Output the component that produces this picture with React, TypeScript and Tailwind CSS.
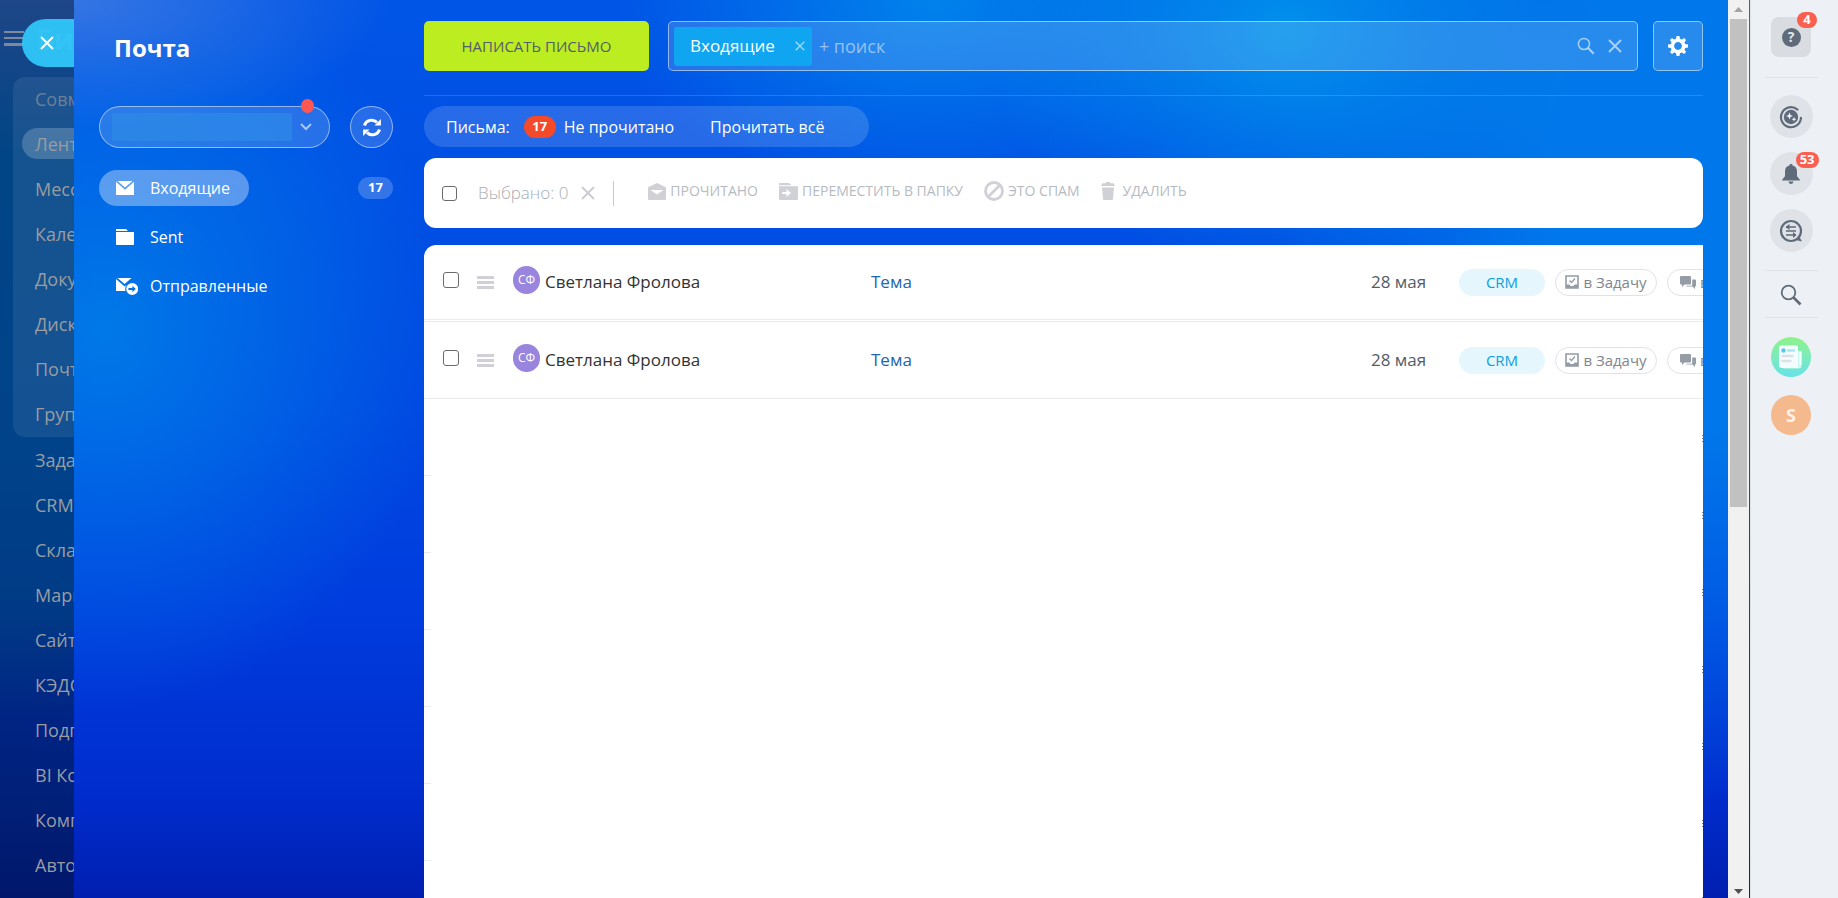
import type { ReactNode } from "react";

const menuGroup = ["Совместная работа", "Лента", "Мессенджер", "Календарь", "Документы", "Диск", "Почта", "Группы"];
const menuItems = ["Задачи", "CRM", "Склад", "Маркетинг", "Сайты", "КЭДО", "Подпись", "BI Конструктор", "Компания", "Автоматизация"];

const messages = [
    { id: 1, from: "Светлана Фролова", initials: "СФ", subject: "Тема", date: "28 мая" },
    { id: 2, from: "Светлана Фролова", initials: "СФ", subject: "Тема", date: "28 мая" },
];

const placeholderRows = [1, 2, 3, 4, 5, 6, 7];

function CrossIcon({ className }: { className: string }) {
    return (
        <svg viewBox="0 0 14 14" fill="none" stroke="currentColor" className={className}>
            <path d="M1 1l12 12M13 1L1 13" strokeWidth="1.9" />
        </svg>
    );
}

function LensIcon({ className }: { className: string }) {
    return (
        <svg viewBox="0 0 22 22" fill="none" stroke="currentColor" className={className}>
            <circle cx="8.5" cy="8.5" r="6.8" strokeWidth="1.8" />
            <path d="M13.5 13.5l7 7" strokeWidth="2.6" />
        </svg>
    );
}

function EnvelopeIcon() {
    return (
        <svg viewBox="0 0 18 14" fill="currentColor" className="w-[18px] h-[14px]">
            <path d="M1.5 0h15L9 6.6z" />
            <path d="M0 .8l9 8 9-8V14H0z" />
        </svg>
    );
}

function FolderIcon() {
    return (
        <svg viewBox="0 0 18 16" fill="currentColor" className="w-[18px] h-4">
            <path d="M0 0h10l2 2H0z" />
            <path d="M0 3h18v12.2a.8.8 0 0 1-.8.8H.8a.8.8 0 0 1-.8-.8z" />
        </svg>
    );
}

function OutboxIcon() {
    return (
        <svg viewBox="0 0 22 17" fill="currentColor" className="w-[22px] h-[17px]">
            <path d="M1.5 0h14L8.6 6z" />
            <path d="M0 1l8.6 7.4L11 6.6a7 7 0 0 0-1.6 6.4H0z" />
            <path fillRule="evenodd" d="M16.2 5a6 6 0 1 1 0 12 6 6 0 0 1 0-12zm.2 2.8v2.3h-4v1.8h4v2.3l3.4-3.2z" />
        </svg>
    );
}

function RefreshIcon() {
    return (
        <svg viewBox="0 0 18 19" fill="none" stroke="currentColor" className="w-[18px] h-[19px]">
            <path d="M1.4 7.500A7.6 7.6 0 0 1 14 4.400" strokeWidth="3" />
            <path d="M16.600 11.500A7.6 7.6 0 0 1 4 14.600" strokeWidth="3" />
            <path d="M17.900 1v6.600h-6.400zM.1 18v-6.600h6.400z" fill="currentColor" stroke="none" />
        </svg>
    );
}

function GearIcon() {
    return (
        <svg viewBox="-10 -10 20 20" className="w-5 h-5">
            <g fill="currentColor">
                <path d="M-2-7l.6-3h2.800l.6 3z" />
                <path d="M-2-7l.6-3h2.800l.6 3z" transform="rotate(45)" />
                <path d="M-2-7l.6-3h2.800l.6 3z" transform="rotate(90)" />
                <path d="M-2-7l.6-3h2.800l.6 3z" transform="rotate(135)" />
                <path d="M-2-7l.6-3h2.800l.6 3z" transform="rotate(180)" />
                <path d="M-2-7l.6-3h2.800l.6 3z" transform="rotate(225)" />
                <path d="M-2-7l.6-3h2.800l.6 3z" transform="rotate(270)" />
                <path d="M-2-7l.6-3h2.800l.6 3z" transform="rotate(315)" />
            </g>
            <circle r="5.700" fill="none" stroke="currentColor" strokeWidth="3.600" />
        </svg>
    );
}

function ActionButton({ icon, label }: { icon: ReactNode; label: string }) {
    return (
        <button className="flex items-center gap-1 text-sm whitespace-nowrap text-[#b6bbc2]">
            <span className="text-[#cfd1d6]">{icon}</span>
            {label}
        </button>
    );
}

function PortalMenu() {
    return (
        <aside className="relative w-[74px] shrink-0 overflow-hidden bg-[linear-gradient(to_bottom,#1e4688_0%,#004586_18%,#00438a_50%,#003a86_68%,#002484_80%,#001e74_92%,#00176c_100%)]">
            <div className="flex items-center gap-3 h-[77px] pl-1 whitespace-nowrap">
                <svg viewBox="0 0 20 15" className="w-5 h-[15px] shrink-0 fill-[#7e8a9c]">
                    <path d="M0 0h20v2H0zM0 6h20v2H0zM0 12h20v3H0z" />
                </svg>
                <span className="text-[28px] font-bold text-[#8fa0b0]">Битрикс</span>
            </div>
            <nav className="text-lg whitespace-nowrap text-[#999da1]">
                <div className="ml-[13px] h-[360px] rounded-l-xl bg-white/8">
                    {menuGroup.map((item, i) => (
                        <a
                            key={item}
                            href="#"
                            className={
                                i === 1
                                    ? "flex items-center h-[31px] my-[7px] ml-[9px] pl-[13px] rounded-l-full bg-white/20"
                                    : i === 0
                                      ? "flex items-center h-11 pl-[22px] text-[#6c8097]"
                                      : "flex items-center h-[45px] pl-[22px]"
                            }
                        >
                            {item}
                        </a>
                    ))}
                </div>
                {menuItems.map((item) => (
                    <a key={item} href="#" className="flex items-center h-[45px] pl-[35px]">
                        {item}
                    </a>
                ))}
            </nav>
            <button
                aria-label="Закрыть"
                className="absolute top-[19px] right-0 w-[52px] h-12 pl-[18px] rounded-l-full bg-[#2fc4f7]/97 text-white"
            >
                <CrossIcon className="w-[14px] h-[14px]" />
            </button>
        </aside>
    );
}

function FolderList() {
    return (
        <div className="w-[294px] shrink-0 text-white">
            <h1 className="mt-[30px] ml-[15px] text-2xl leading-9 font-bold">Почта</h1>
            <div className="flex items-center justify-between mt-10">
                <div className="relative flex items-center w-[231px] h-[42px] pl-3 rounded-full border border-white/50 bg-white/15">
                    <select aria-label="Почтовый ящик" className="w-[180px] h-7 appearance-none bg-[#2e8ae6]/70">
                        <option></option>
                    </select>
                    <svg viewBox="0 0 12 8" fill="none" stroke="currentColor" className="w-3 h-2 ml-2 text-white/60">
                        <path d="M1 1l5 5 5-5" strokeWidth="2" />
                    </svg>
                    <span className="absolute -top-2 right-[15px] w-[13px] h-[14px] rounded-full bg-[#ff5752]" />
                </div>
                <button
                    aria-label="Обновить"
                    className="flex items-center justify-center w-[43px] h-[42px] rounded-full border border-white/50 bg-white/15"
                >
                    <RefreshIcon />
                </button>
            </div>
            <nav className="mt-[22px] text-base">
                <div className="flex items-center justify-between">
                    <a href="#" className="flex items-center gap-4 h-9 pl-[17px] pr-[19px] rounded-full bg-white/35">
                        <EnvelopeIcon />
                        Входящие
                    </a>
                    <span className="flex items-center justify-center w-[35px] h-[22px] rounded-full bg-white/20 text-[13px] font-bold">
                        17
                    </span>
                </div>
                <a href="#" className="flex items-center gap-4 h-9 mt-[13px] pl-[17px]">
                    <FolderIcon />
                    Sent
                </a>
                <a href="#" className="flex items-center gap-3 h-9 mt-[13px] pl-[17px]">
                    <OutboxIcon />
                    Отправленные
                </a>
            </nav>
        </div>
    );
}

function SearchBar() {
    return (
        <div className="flex mt-[21px]">
            <button className="w-[225px] h-[50px] rounded-[5px] bg-[#bbed21] text-[15px] text-[#535c69]">
                НАПИСАТЬ ПИСЬМО
            </button>
            <div className="flex flex-1 items-center h-[50px] ml-[19px] pl-[5px] pr-[15px] rounded-[5px] border border-white/50 bg-white/15">
                <span className="flex items-center h-[39px] pl-4 pr-[7px] rounded-[3px] bg-[#0fa5f0] text-[17px] text-white">
                    Входящие
                    <button aria-label="Убрать фильтр" className="ml-5 text-white/60">
                        <CrossIcon className="w-[10px] h-[10px]" />
                    </button>
                </span>
                <input
                    aria-label="Поиск"
                    placeholder="+ поиск"
                    className="flex-1 min-w-0 ml-[7px] bg-transparent text-lg text-white outline-none placeholder:text-white/50"
                />
                <button aria-label="Найти" className="text-white/60">
                    <LensIcon className="w-[18px] h-[18px]" />
                </button>
                <button aria-label="Очистить" className="ml-[13px] text-white/60">
                    <CrossIcon className="w-[14px] h-[14px]" />
                </button>
            </div>
            <button
                aria-label="Настройки"
                className="flex items-center justify-center w-[50px] h-[50px] ml-[15px] rounded-[5px] border border-white/50 bg-white/15 text-white"
            >
                <GearIcon />
            </button>
        </div>
    );
}

function Toolbar() {
    return (
        <div className="flex items-center h-[70px] mt-[11px] pl-[18px] rounded-xl bg-white">
            <input
                type="checkbox"
                aria-label="Выбрать все"
                className="w-[15px] h-[15px] appearance-none rounded-[3px] border border-[#6b6b6b] bg-white"
            />
            <span className="ml-[21px] text-[17px] font-light text-[#a8adb4]">Выбрано: 0</span>
            <button aria-label="Снять выделение" className="ml-[13px] text-[#c9ccd1]">
                <CrossIcon className="w-[14px] h-[14px]" />
            </button>
            <span className="w-px h-[25px] ml-[18px] bg-[#c6c9ce]" />
            <div className="flex items-center gap-[21px] ml-[34px] pb-1">
                <ActionButton
                    label="ПРОЧИТАНО"
                    icon={
                        <svg viewBox="0 0 18 17" fill="currentColor" className="w-[18px] h-[17px]">
                            <path fillRule="evenodd" d="M9 0l8.400 4a1 1 0 0 1 .6.900V16a1 1 0 0 1-1 1H1a1 1 0 0 1-1-1V4.900A1 1 0 0 1 .6 4zM2.500 7L9 11.500 15.500 7z" />
                        </svg>
                    }
                />
                <ActionButton
                    label="ПЕРЕМЕСТИТЬ В ПАПКУ"
                    icon={
                        <svg viewBox="0 0 19 17" fill="currentColor" className="w-[19px] h-[17px]">
                            <path d="M0 0h10l2.500 2.200H0z" />
                            <path fillRule="evenodd" d="M0 3.200h19V16a1 1 0 0 1-1 1H1a1 1 0 0 1-1-1zM7.500 6v3H3v2h4.500v3l4.500-4z" />
                        </svg>
                    }
                />
                <ActionButton
                    label="ЭТО СПАМ"
                    icon={
                        <svg viewBox="0 0 20 20" fill="none" stroke="currentColor" className="w-5 h-5">
                            <circle cx="10" cy="10" r="8.500" strokeWidth="2.800" />
                            <path d="M4.500 15.500l11-11" strokeWidth="2.800" />
                        </svg>
                    }
                />
                <ActionButton
                    label="УДАЛИТЬ"
                    icon={
                        <svg viewBox="0 0 14 18" fill="currentColor" className="w-[14px] h-[18px] mr-1">
                            <path d="M5 0h4v1.200h3.500L14 4H0l1.500-2.800H5z" />
                            <path d="M1 5.500h12l-1 11.600a1 1 0 0 1-1 .9H3a1 1 0 0 1-1-.9z" />
                        </svg>
                    }
                />
            </div>
        </div>
    );
}

function MessageList() {
    return (
        <div className="flex-1 min-h-0 mt-[17px] rounded-tl-xl overflow-hidden bg-white">
            <table className="w-full table-fixed border-separate border-spacing-0 text-[17px] text-left">
                <colgroup>
                    <col className="w-[53px]" />
                    <col className="w-9" />
                    <col className="w-[358px]" />
                    <col />
                    <col className="w-[88px]" />
                    <col className="w-[244px]" />
                </colgroup>
                <tbody>
                    {messages.map((m, i) => (
                        <tr
                            key={m.id}
                            className={
                                i === 0
                                    ? "h-[77px] *:border-b-3 *:border-double *:border-[#eaebed]"
                                    : "h-[77px] *:border-b *:border-[#eaebed]"
                            }
                        >
                            <td className="pl-[19px]">
                                <input
                                    type="checkbox"
                                    aria-label={m.from}
                                    className="block w-4 h-4 mb-1 appearance-none rounded-[3px] border border-[#6b6b6b] bg-white"
                                />
                            </td>
                            <td>
                                <svg viewBox="0 0 17 13" className="w-[17px] h-[13px] fill-[#cfd1d6]">
                                    <path d="M0 0h17v3H0zM0 5h17v3H0zM0 10h17v3H0z" />
                                </svg>
                            </td>
                            <td>
                                <div className="flex items-center gap-[5px] text-[#333]">
                                    <span className="flex items-center justify-center w-[27px] h-7 mb-1 rounded-full bg-[#9985dd] text-xs text-white">
                                        {m.initials}
                                    </span>
                                    {m.from}
                                </div>
                            </td>
                            <td>
                                <a href="#" className="text-[#2066b0]">
                                    {m.subject}
                                </a>
                            </td>
                            <td className="text-[#535c69] whitespace-nowrap">{m.date}</td>
                            <td className="overflow-hidden">
                                <div className="flex items-center gap-[10px] text-[15px] whitespace-nowrap text-[#80868e]">
                                    <button className="shrink-0 w-[86px] h-[27px] rounded-full bg-[#e5f7fd] text-[#0b9fe0]">
                                        CRM
                                    </button>
                                    <button className="flex shrink-0 items-center justify-center gap-1 w-[102px] h-[27px] rounded-full border border-[#e0e2e5]">
                                        <svg viewBox="0 0 14 14" fill="none" stroke="currentColor" className="w-[14px] h-[14px] text-[#959ca5]">
                                            <path d="M1 1h12v12H1z" strokeWidth="1.600" />
                                            <path d="M1 9.500h3.500l1 1.500h3l1-1.500H13V13H1z" fill="currentColor" stroke="none" />
                                            <path d="M4.500 5.500l2 2 3.500-4" strokeWidth="1.400" />
                                        </svg>
                                        в Задачу
                                    </button>
                                    <button className="flex shrink-0 items-center gap-1 h-[27px] px-3 rounded-full border border-[#e0e2e5]">
                                        <svg viewBox="0 0 16 13" fill="currentColor" className="w-4 h-[13px] text-[#959ca5]">
                                            <path d="M1 0h9a1 1 0 0 1 1 1v6.500a1 1 0 0 1-1 1H4.500L2 11V8.500H1a1 1 0 0 1-1-1V1a1 1 0 0 1 1-1z" />
                                            <path d="M12.200 3.500H15a1 1 0 0 1 1 1v5a1 1 0 0 1-1 1V13l-2.500-2.500H7a1 1 0 0 1-1-.8h5.200a1 1 0 0 0 1-1z" />
                                        </svg>
                                        в Чат
                                    </button>
                                </div>
                            </td>
                        </tr>
                    ))}
                </tbody>
            </table>
            {placeholderRows.map((n) => (
                <div key={n} className="flex h-[77px] justify-between">
                    <span className="w-[7px] border-b border-[#eaebed]" />
                    <span className="w-px h-2 mt-9 bg-[repeating-linear-gradient(to_bottom,#7d838b_0,#7d838b_1px,#fff_1px,#fff_3px)]" />
                </div>
            ))}
        </div>
    );
}

function Scrollbar() {
    return (
        <div className="flex flex-col items-center w-[21px] shrink-0 pt-[7px] pb-1 bg-[#f1f1f1]">
            <svg viewBox="0 0 9 5" className="w-[9px] h-[5px] fill-[#a3a3a3]">
                <path d="M4.500 0L9 5H0z" />
            </svg>
            <div className="w-[17px] h-[488px] mt-[7px] bg-[#c1c1c1]" />
            <svg viewBox="0 0 9 5" className="w-[9px] h-[5px] mt-auto fill-[#505050]">
                <path d="M0 0h9L4.500 5z" />
            </svg>
        </div>
    );
}

function RailBadge({ children }: { children: ReactNode }) {
    return (
        <span className="absolute -right-[6px] flex items-center justify-center h-4 min-w-5 px-1 rounded-full bg-[#fb5f4f] text-[13px] font-bold text-white">
            {children}
        </span>
    );
}

function Rail() {
    return (
        <aside className="flex flex-col items-center w-[88px] shrink-0 pr-[7px] border-l border-[#dbe3e9] bg-[#edf1f5] text-[#5f6b7a]">
            <button aria-label="Помощь" className="relative flex items-center justify-center w-10 h-10 mt-[17px] rounded-lg bg-[#d9dce0]">
                <span className="flex items-center justify-center w-[19px] h-[19px] rounded-full bg-[#5f6b7a] text-sm font-bold text-[#e4e7ea]">
                    ?
                </span>
                <span className="absolute inset-x-0 -top-[5px]">
                    <RailBadge>4</RailBadge>
                </span>
            </button>
            <hr className="w-[53px] mt-5 border-[#e0e4e7]" />
            <button aria-label="CoPilot" className="flex items-center justify-center w-[43px] h-[43px] mt-[17px] rounded-full bg-[#dfe2e7]">
                <svg viewBox="0 0 24 24" className="w-6 h-6">
                    <path d="M18.500 4.600A10 10 0 1 0 22 12.800" fill="none" stroke="currentColor" strokeWidth="2.200" strokeLinecap="round" />
                    <circle cx="12" cy="12" r="7.200" fill="currentColor" />
                    <path d="M10.500 7.500l1 2.500 2.500 1-2.500 1-1 2.500-1-2.500L7 11l2.500-1zM15 12l.7 1.600 1.600.7-1.600.7L15 16.600l-.7-1.600-1.600-.7 1.600-.7z" fill="#edf1f5" />
                </svg>
            </button>
            <button aria-label="Уведомления" className="relative flex items-center justify-center w-[43px] h-[43px] mt-[14px] rounded-full bg-[#dfe2e7]">
                <svg viewBox="0 0 18 20" fill="currentColor" className="w-[18px] h-5">
                    <path d="M9 0c1 0 1.600.7 1.600 1.600C13.500 2.300 15 4.500 15 7.300V12c0 1.500 3 2.500 3 4.500H0C0 14.500 3 13.500 3 12V7.300c0-2.800 1.500-5 4.400-5.700C7.400.7 8 0 9 0z" />
                    <path d="M6.500 17.500h5a2.500 2.500 0 0 1-5 0z" />
                </svg>
                <span className="absolute inset-x-0 top-0">
                    <RailBadge>53</RailBadge>
                </span>
            </button>
            <button aria-label="Чаты" className="flex items-center justify-center w-[43px] h-[43px] mt-[14px] rounded-full bg-[#dfe2e7]">
                <svg viewBox="0 0 24 24" fill="none" stroke="currentColor" className="w-6 h-6">
                    <circle cx="12" cy="12" r="10" strokeWidth="2.200" />
                    <path d="M20 17l3 5.500-6-1.500z" fill="currentColor" stroke="none" />
                    <path d="M7 8h10M7 12h10M7 16h10" strokeWidth="1.600" />
                    <path d="M10.500 5v6L6.500 8zM14 13v6l3.500-3z" fill="currentColor" stroke="none" />
                </svg>
            </button>
            <hr className="w-[53px] mt-[18px] border-[#dfe3e7]" />
            <button aria-label="Поиск по порталу" className="mt-[13px]">
                <LensIcon className="w-[22px] h-[22px]" />
            </button>
            <hr className="w-[53px] mt-[11px] border-[#e0e4e7]" />
            <button
                aria-label="Новости"
                className="flex items-center justify-center w-10 h-10 mt-[19px] rounded-full bg-linear-to-b from-[#8ff287] to-[#67e2e8]"
            >
                <svg viewBox="0 0 24 24" className="w-6 h-6">
                    <path d="M19 6h2.500a1 1 0 0 1 1 1v14a2.500 2.500 0 0 1-2.500 2.500H4z" fill="#c8f7ee" />
                    <path d="M0 2a1.500 1.500 0 0 1 1.500-1.500h16A1.500 1.500 0 0 1 19 2v17a3 3 0 0 0 2.500 4H3a3 3 0 0 1-3-3z" fill="#f4fdfd" />
                    <path d="M20 6.500h2.500V19a1.200 1.200 0 0 1-2.500 0z" fill="#f4fdfd" />
                    <circle cx="4.500" cy="5.500" r="2.200" fill="#55c9ea" />
                    <path d="M9 5.500h6" stroke="#a5e9f5" strokeWidth="2.400" strokeLinecap="round" />
                    <path d="M3.500 11h10M3.500 16h8" stroke="#dde1e6" strokeWidth="2.400" strokeLinecap="round" />
                </svg>
            </button>
            <button className="w-10 h-10 mt-[18px] rounded-full bg-[#f5b98e] text-lg font-bold text-[#fdf1e8]">S</button>
        </aside>
    );
}

export default function App() {
    return (
        <div className="flex h-screen overflow-hidden font-['Open_Sans','Noto_Sans',sans-serif]">
            <PortalMenu />
            <main className="flex flex-1 min-w-0 gap-[31px] pl-[25px] pr-[25px] bg-[radial-gradient(320px_130px_at_0_0,#3575e4,transparent),radial-gradient(340px_380px_at_30px_330px,#0079e8,transparent),radial-gradient(300px_240px_at_1210px_30px,#0091ec,transparent),radial-gradient(320px_200px_at_860px_0px,#0082ec,transparent),radial-gradient(460px_620px_at_1654px_180px,#0077ea_40%,transparent),linear-gradient(to_bottom,#0055e6_0%,#0049e2_45%,#003cde_68%,#002dce_88%,#001fb0_100%)]">
                <FolderList />
                <section className="flex flex-col flex-1 min-w-0">
                    <SearchBar />
                    <hr className="mt-6 border-white/15" />
                    <div className="flex items-center self-start w-[445px] h-[41px] mt-[10px] pl-[22px] rounded-full bg-white/15 text-base text-white">
                        Письма:
                        <span className="flex items-center justify-center w-8 h-[22px] ml-[14px] mr-2 rounded-full bg-[#f54a2a] text-[13px] font-bold">
                            17
                        </span>
                        <a href="#">Не прочитано</a>
                        <a href="#" className="ml-9">
                            Прочитать всё
                        </a>
                    </div>
                    <Toolbar />
                    <MessageList />
                </section>
            </main>
            <Scrollbar />
            <div className="w-px shrink-0 bg-linear-to-b from-[#0077ea] to-[#0018cc]" />
            <Rail />
        </div>
    );
}
